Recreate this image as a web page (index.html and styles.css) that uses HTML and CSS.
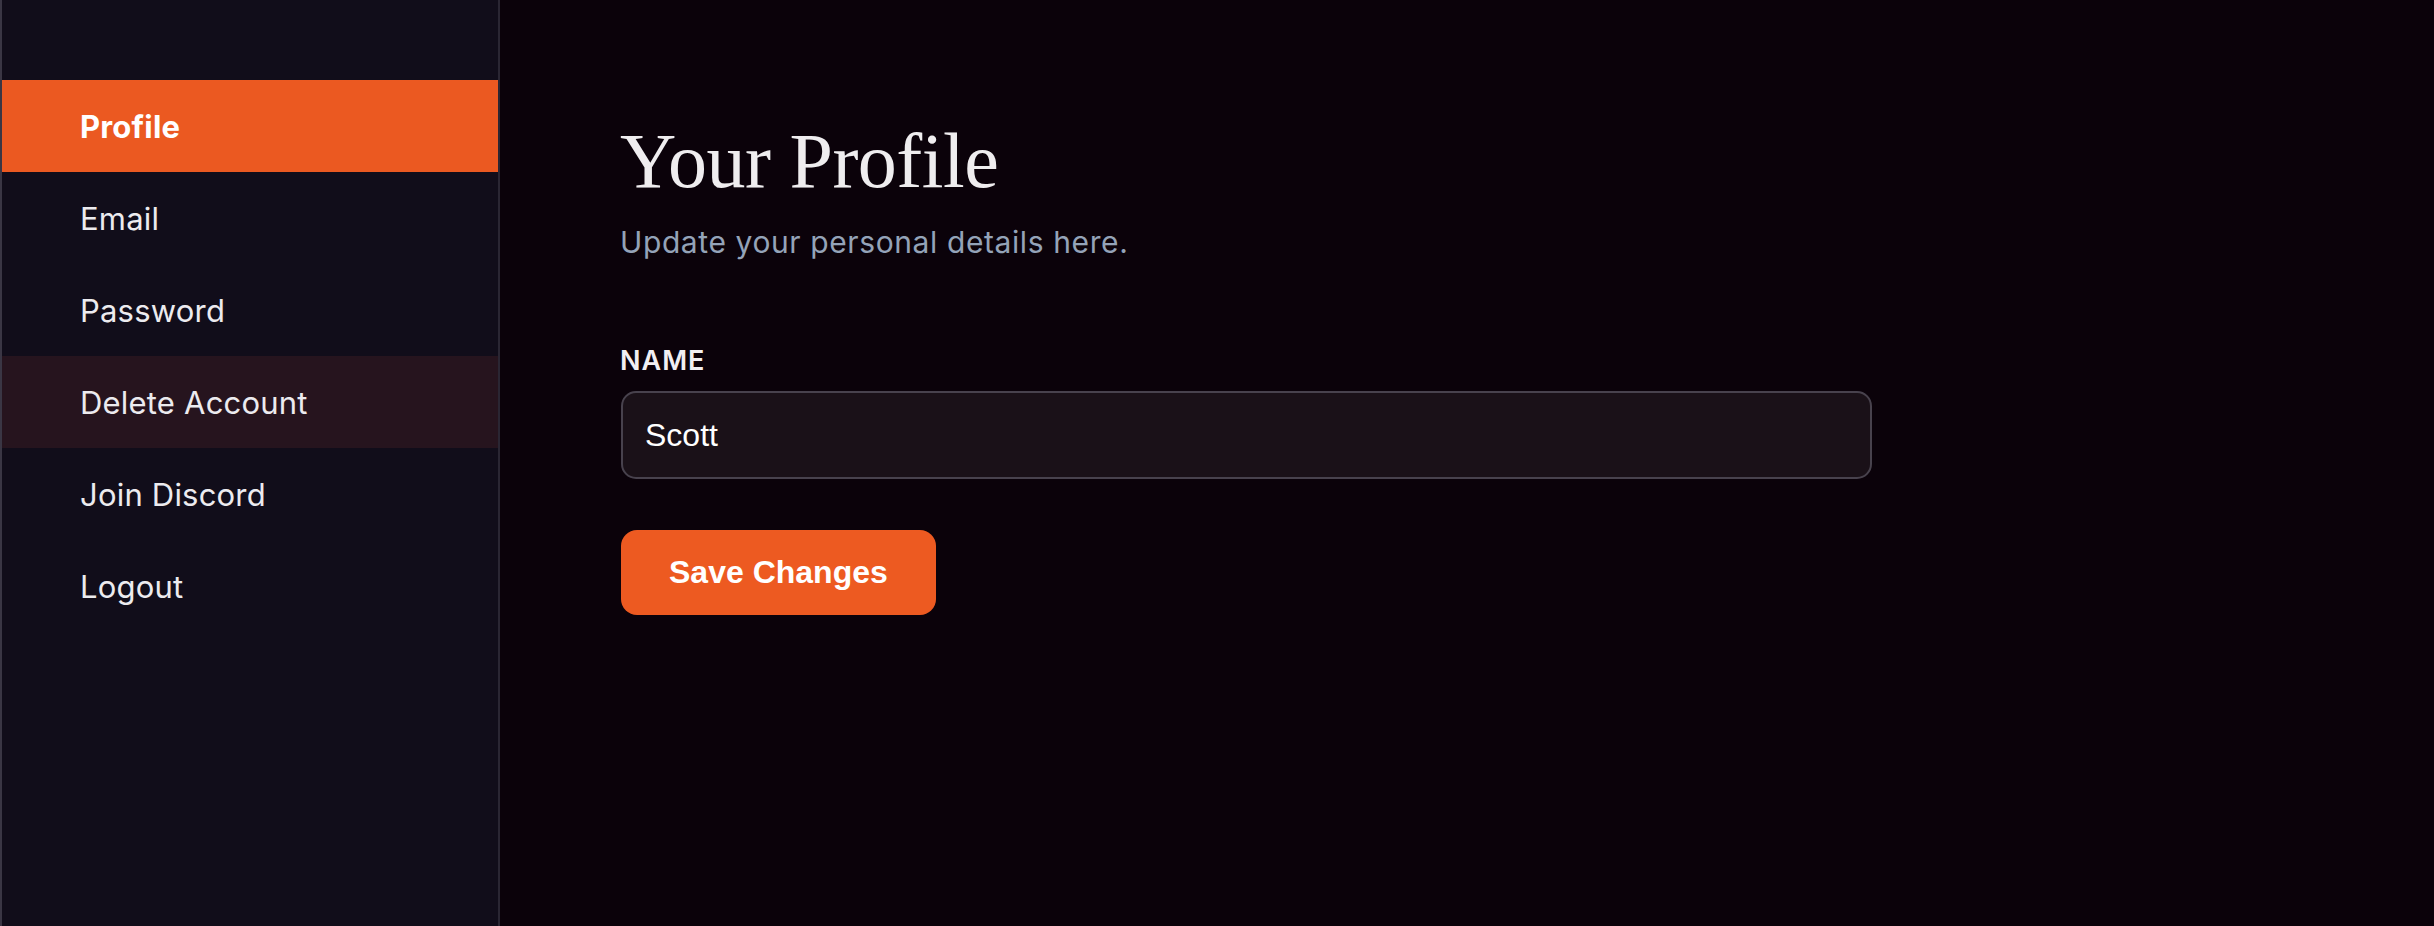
FILE: index.html
```html
<!DOCTYPE html>
<html lang="en">
<head>
  <meta charset="UTF-8">
  <title>Account - Your Profile</title>
  <link rel="stylesheet" href="styles.css">
</head>
<body>

<div class="layout">
  <nav class="sidebar">
    <a class="nav-item active" href="#">Profile</a>
    <a class="nav-item" href="#">Email</a>
    <a class="nav-item" href="#">Password</a>
    <a class="nav-item danger" href="#">Delete Account</a>
    <a class="nav-item" href="#">Join Discord</a>
    <a class="nav-item" href="#">Logout</a>
  </nav>

  <main class="content">
    <h1 class="page-title">Your Profile</h1>
    <p class="page-sub">Update your personal details here.</p>

    <form class="profile-form" onsubmit="return false">
      <label class="field-label" for="nameInput">NAME</label>
      <input type="text" id="nameInput" class="field-input" value="Scott">
      <button type="submit" class="btn-save">Save Changes</button>
    </form>
  </main>
</div>

</body>
</html>
```

FILE: styles.css
```css
* {
  margin: 0;
  padding: 0;
  box-sizing: border-box;
}

body {
  font-family: 'Inter', sans-serif;
  background: #0b020a;
  color: #ececec;
}

.layout {
  display: flex;
  min-height: 100vh;
}

.sidebar {
  width: 500px;
  flex-shrink: 0;
  background: #110d1a;
  border-left: 2px solid #3a3644;
  border-right: 2px solid #2a2633;
  padding-top: 80px;
  display: flex;
  flex-direction: column;
}

.nav-item {
  display: flex;
  align-items: center;
  height: 92px;
  padding-left: 78px;
  font-size: 31px;
  letter-spacing: 0.2px;
  color: #ecebef;
  text-decoration: none;
}

.nav-item.active {
  background: #eb5921;
  color: #fff;
  font-weight: 700;
}

.nav-item.danger {
  background: #26141e;
}

.content {
  flex: 1;
  padding: 114px 0 0 120px;
}

.page-title {
  font-family: 'Liberation Serif', serif;
  font-weight: 400;
  font-size: 78px;
  line-height: 94px;
  letter-spacing: -0.5px;
  color: #efedef;
}

.page-sub {
  margin-top: 16px;
  font-size: 30px;
  line-height: 36px;
  letter-spacing: 0.6px;
  color: #94a3b8;
}

.profile-form {
  display: flex;
  flex-direction: column;
  align-items: flex-start;
}

.field-label {
  margin-top: 85px;
  font-size: 27px;
  line-height: 32px;
  font-weight: 600;
  letter-spacing: 1px;
  color: #f1eff2;
}

.field-input {
  margin-top: 14px;
  margin-left: 1px;
  width: 1251px;
  height: 88px;
  padding: 0 22px;
  background: #1a1118;
  border: 2px solid #48424d;
  border-radius: 15px;
  font-family: 'Liberation Sans', sans-serif;
  font-size: 32px;
  color: #fff;
  outline: none;
}

.btn-save {
  margin-top: 51px;
  margin-left: 1px;
  height: 85px;
  padding: 0 48px;
  background: #ed5a21;
  border: none;
  border-radius: 16px;
  font-family: 'Liberation Sans', sans-serif;
  font-weight: 700;
  font-size: 32px;
  color: #fff;
  cursor: pointer;
}
```
